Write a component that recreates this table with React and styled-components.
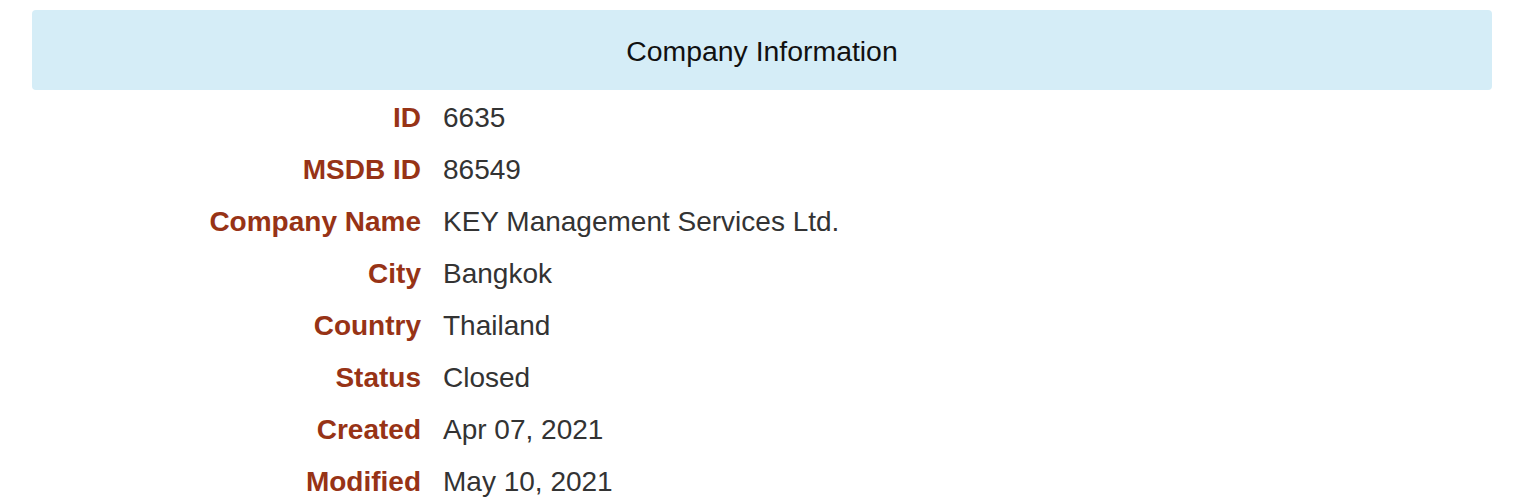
import React from "react";
import styled, { createGlobalStyle } from "styled-components";

const Global = createGlobalStyle`
  html, body { margin: 0; padding: 0; background: #fff; }
  body { font-family: "Liberation Sans", Arial, Helvetica, sans-serif; }
`;

const Page = styled.div`
  padding: 10px 31px 0 32px;
`;

const Header = styled.div`
  box-sizing: border-box;
  height: 80px;
  padding-top: 3px;
  background: #d5edf7;
  border-radius: 4px;
  display: flex;
  align-items: center;
  justify-content: center;
  font-size: 28.4px;
  color: #111;
`;

const Grid = styled.dl`
  margin: 2px 0 0;
  display: grid;
  grid-template-columns: 389px 1fr;
  column-gap: 22px;
  grid-auto-rows: 52px;
  align-items: center;
`;

const Label = styled.dt`
  text-align: right;
  font-weight: bold;
  font-size: 28px;
  color: #973316;
`;

const Value = styled.dd`
  margin: 0;
  font-size: 28px;
  color: #333;
`;

const rows = [
  ["ID", "6635"],
  ["MSDB ID", "86549"],
  ["Company Name", "KEY Management Services Ltd."],
  ["City", "Bangkok"],
  ["Country", "Thailand"],
  ["Status", "Closed"],
  ["Created", "Apr 07, 2021"],
  ["Modified", "May 10, 2021"],
];

export default function App() {
  return (
    <Page>
      <Global />
      <Header>Company Information</Header>
      <Grid>
        {rows.map(([k, v]) => (
          <React.Fragment key={k}>
            <Label>{k}</Label>
            <Value>{v}</Value>
          </React.Fragment>
        ))}
      </Grid>
    </Page>
  );
}
